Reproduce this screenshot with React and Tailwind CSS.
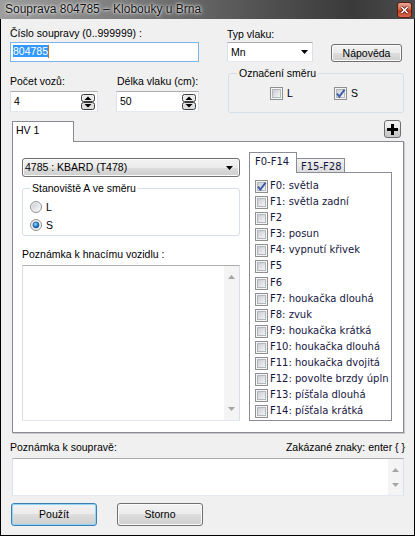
import React from 'react';

const fLabels = [
  'F0: světla',
  'F1: světla zadní',
  'F2',
  'F3: posun',
  'F4: vypnutí křivek',
  'F5',
  'F6',
  'F7: houkačka dlouhá',
  'F8: zvuk',
  'F9: houkačka krátká',
  'F10: houkačka dlouhá',
  'F11: houkačka dvojitá',
  'F12: povolte brzdy úpln',
  'F13: píšťala dlouhá',
  'F14: píšťala krátká',
];

const btnBg =
  'bg-[linear-gradient(#f2f2f2_0%,#ebebeb_50%,#dddddd_50%,#cfcfcf_100%)] shadow-[inset_0_0_0_1px_#fbfbfb]';
const editBorder = 'border border-[#abadb3] border-x-[#dbdfe6] border-b-[#e3e9ef]';

const CheckBox = ({ checked }) => (
  <svg width="13" height="13" viewBox="0 0 13 13" className="shrink-0">
    <defs>
      <linearGradient id="cbfill" x1="0" y1="0" x2="1" y2="1">
        <stop offset="0" stopColor="#c6cad0" />
        <stop offset="1" stopColor="#f7f7f7" />
      </linearGradient>
    </defs>
    <rect x="0.5" y="0.5" width="12" height="12" fill="#f4f4f4" stroke="#8e8f8f" />
    <rect x="2.5" y="2.5" width="8" height="8" fill="url(#cbfill)" stroke="#b3b7bd" />
    {checked && (
      <path d="M3 6.5 L5.3 9.6 L10.6 2.6" fill="none" stroke="#3d5ea6" strokeWidth="1.9" />
    )}
  </svg>
);

const Radio = ({ selected }) => (
  <svg width="12" height="12" viewBox="0 0 12 12" className="shrink-0">
    <defs>
      <linearGradient id="rbfill" x1="0" y1="0" x2="1" y2="1">
        <stop offset="0" stopColor="#c9ccd1" />
        <stop offset="1" stopColor="#fafafa" />
      </linearGradient>
      <radialGradient id="rbdot" cx="0.4" cy="0.35" r="0.7">
        <stop offset="0" stopColor="#a9e1fb" />
        <stop offset="0.5" stopColor="#2b8ad6" />
        <stop offset="1" stopColor="#0f4f9a" />
      </radialGradient>
    </defs>
    <circle cx="6" cy="6" r="5.5" fill="#f2f2f2" stroke="#8f9093" />
    <circle cx="6" cy="6" r="4" fill="url(#rbfill)" />
    {selected && <circle cx="6" cy="6" r="3" fill="url(#rbdot)" stroke="#1b4f8f" strokeWidth="0.6" />}
  </svg>
);

const ArrowDown = () => (
  <svg width="7" height="4" viewBox="0 0 7 4">
    <path d="M0 0h7L3.5 4z" fill="#000" />
  </svg>
);

const Spin = () => (
  <svg width="14" height="16" viewBox="0 0 14 16">
    <rect x="0.5" y="0.5" width="13" height="7" rx="2" fill="#ececec" stroke="#3c3c3c" />
    <rect x="0.5" y="8.5" width="13" height="7" rx="2" fill="#dedede" stroke="#3c3c3c" />
    <path d="M3.5 6 L7 2.5 L10.5 6z" fill="#000" />
    <path d="M3.5 10 L7 13.5 L10.5 10z" fill="#000" />
  </svg>
);

const ScrollArrow = ({ down }) => (
  <svg width="7" height="4" viewBox="0 0 7 4">
    <path d={down ? 'M0 0h7L3.5 4z' : 'M0 4h7L3.5 0z'} fill="#a6a6a6" />
  </svg>
);

const CloseBtn = () => (
  <div className="flex h-[16px] w-[15px] items-center justify-center rounded-[3px] border border-[#5c1e12] bg-[linear-gradient(#e9a896_0%,#d5664b_45%,#c2391d_55%,#d6694c_100%)]">
    <svg width="9" height="8" viewBox="0 0 9 8">
      <path d="M1.5 1 L7.5 7 M7.5 1 L1.5 7" stroke="#4a1a10" strokeWidth="3" />
      <path d="M1.5 1 L7.5 7 M7.5 1 L1.5 7" stroke="#ffffff" strokeWidth="1.6" />
    </svg>
  </div>
);

const SpinEdit = ({ value, width }) => (
  <div className={`flex h-[21px] items-center justify-between bg-white pl-[3px] pr-[2px] ${editBorder} ${width}`}>
    <span>{value}</span>
    <Spin />
  </div>
);

export default function App() {
  return (
    <div className="h-[537px] w-[415px] bg-white font-['Liberation_Sans',Arial,sans-serif] text-[10.5px] leading-[13px] text-black">
      {/* title bar */}
      <div className="flex h-[19px] items-center justify-between bg-[linear-gradient(90deg,#9d9d9d_0%,#7c7c7c_30%,#555555_60%,#3a3a3a_85%,#4c4c4c_100%)] pl-[5px] pr-[3px]">
        <span className="text-[12px] text-[#111] [text-shadow:0_0_4px_#ffffff,0_0_2px_#ffffff]">
          Souprava 804785 – Klobouky u Brna
        </span>
        <CloseBtn />
      </div>

      <div className="flex h-[517px] flex-col border-x border-b border-black bg-[#f0f0f0] px-[9px] pt-[8px]">
        {/* top fields */}
        <div className="flex items-start">
          <div className="w-[189px]">
            <div className="whitespace-nowrap">Číslo soupravy (0..999999) :</div>
            <div className="mt-[2px] h-[20px] border border-[#7eb4ea] bg-white pl-[2px] pt-[2px]">
              <span className="bg-[#3399ff] text-white">804785</span>
              <span className="inline-block h-[13px] w-px bg-[#d2691e] align-top" />
            </div>
            <div className="mt-[13px] flex whitespace-nowrap">
              <div className="w-[88px]">Počet vozů:</div>
              <div className="ml-[19px]">Délka vlaku (cm):</div>
            </div>
            <div className="mt-[3px] flex">
              <SpinEdit value="4" width="w-[88px]" />
              <SpinEdit value="50" width="ml-[18px] w-[83px]" />
            </div>
          </div>

          <div className="ml-[28px] mt-[1px] w-[177px]">
            <div>Typ vlaku:</div>
            <div className="mt-[1px] flex items-start">
              <div className={`flex h-[20px] w-[86px] items-center justify-between bg-white pl-[3px] pr-[4px] ${editBorder}`}>
                <span>Mn</span>
                <ArrowDown />
              </div>
              <div className={`ml-[18px] mt-[2px] flex h-[18px] w-[71px] items-center justify-center rounded-[3px] border border-[#707070] ${btnBg}`}>
                Nápověda
              </div>
            </div>
            <fieldset className="ml-[1px] mt-[5px] w-[176px] rounded-[3px] border border-[#d5dfe5] pb-[12px] pt-[7px]">
              <legend className="ml-[8px] px-[2px]">Označení směru</legend>
              <div className="flex h-[13px] items-center pl-[41px]">
                <div className="flex w-[64px] items-center gap-[4px]">
                  <CheckBox />
                  <span>L</span>
                </div>
                <div className="flex items-center gap-[4px]">
                  <CheckBox checked />
                  <span>S</span>
                </div>
              </div>
            </fieldset>
          </div>
        </div>

        {/* HV tabs */}
        <div className="ml-[2px] mt-[7px] w-[392px]">
          <div className="flex h-[21px] items-start">
            <div className="relative z-10 mt-[1px] h-[21px] w-[62px] border border-b-0 border-[#898c95] bg-white pl-[3px] pt-[2px]">
              HV 1
            </div>
            <div className="ml-auto mr-[3px] flex h-[18px] w-[17px] items-center justify-center rounded-[3px] border border-[#6f6f6f] bg-[linear-gradient(#f4f4f4_0%,#e6e6e6_50%,#d4d4d4_50%,#c6c6c6_100%)]">
              <svg width="11" height="11" viewBox="0 0 11 11">
                <path d="M4 0h3v4h4v3H7v4H4V7H0V4h4z" fill="#000" />
              </svg>
            </div>
          </div>
          <div className="flex h-[292px] items-start border border-[#898c95] bg-white pl-[9px] pt-[10px] shadow-[1px_1px_0_#c9c9c9]">
            {/* left column */}
            <div className="mt-[6px] w-[218px]">
              <div className={`flex h-[19px] items-center justify-between rounded-[3px] border border-[#707070] pl-[2px] pr-[6px] ${btnBg}`}>
                <span>4785 : KBARD (T478)</span>
                <ArrowDown />
              </div>
              <fieldset className="mt-[5px] rounded-[3px] border border-[#d5dfe5] pb-[4px] pt-[6px]">
                <legend className="ml-[7px] px-[2px]">Stanoviště A ve směru</legend>
                <div className="flex flex-col gap-[6px] pl-[7px]">
                  <div className="flex h-[12px] items-center gap-[4px]">
                    <Radio />
                    <span>L</span>
                  </div>
                  <div className="flex h-[12px] items-center gap-[4px]">
                    <Radio selected />
                    <span>S</span>
                  </div>
                </div>
              </fieldset>
              <div className="mt-[12px]">Poznámka k hnacímu vozidlu :</div>
              <div className={`mt-[4px] flex h-[156px] bg-white ${editBorder}`}>
                <div className="flex-1" />
                <div className="flex w-[15px] flex-col items-center justify-between bg-[#f4f4f4] pb-[9px] pt-[9px]">
                  <ScrollArrow />
                  <ScrollArrow down />
                </div>
              </div>
            </div>

            {/* right column: functions */}
            <div className="ml-[9px] w-[143px] font-['DejaVu_Sans',sans-serif] text-[10px] text-[#16163e]">
              <div className="flex h-[20px] items-start">
                <div className="relative z-10 h-[21px] w-[48px] border border-b-0 border-[#898c95] bg-white pl-[5px] pt-[2px]">
                  F0-F14
                </div>
                <div className="mt-[6px] h-[14px] w-[48px] border-r border-t border-[#898c95] bg-[linear-gradient(#f3f3f3,#dcdcdc)] pl-[4px] pt-px">
                  F15-F28
                </div>
              </div>
              <div className="h-[249px] border border-[#898c95] bg-white pl-[5px] pt-[6px]">
                {fLabels.map((label, i) => (
                  <div key={label} className="flex h-[16.1px] items-start gap-[2px]">
                    <div className="mt-[1px]">
                      <CheckBox checked={i === 0} />
                    </div>
                    <span className="whitespace-nowrap">{label}</span>
                  </div>
                ))}
              </div>
            </div>
          </div>
        </div>

        {/* bottom */}
        <div className="mt-[8px] flex justify-between">
          <span>Poznámka k soupravě:</span>
          <span>Zakázané znaky: enter {'{ }'}</span>
        </div>
        <div className={`ml-[2px] mt-[4px] flex h-[38px] w-[392px] bg-white ${editBorder}`}>
          <div className="flex-1" />
          <div className="flex w-[15px] flex-col items-center justify-between bg-[#f4f4f4] pb-[8px] pt-[9px]">
            <ScrollArrow />
            <ScrollArrow down />
          </div>
        </div>
        <div className="mt-[7px] flex gap-[20px] pl-[1px]">
          <div className="flex h-[23px] w-[86px] items-center justify-center rounded-[3px] border border-[#3c7fb1] bg-[linear-gradient(#f2f2f2_0%,#ebebeb_50%,#dddddd_50%,#cfcfcf_100%)] shadow-[inset_0_0_0_1px_#8fd6f8]">
            Použít
          </div>
          <div className={`flex h-[23px] w-[86px] items-center justify-center rounded-[3px] border border-[#707070] ${btnBg}`}>
            Storno
          </div>
        </div>
      </div>
    </div>
  );
}
